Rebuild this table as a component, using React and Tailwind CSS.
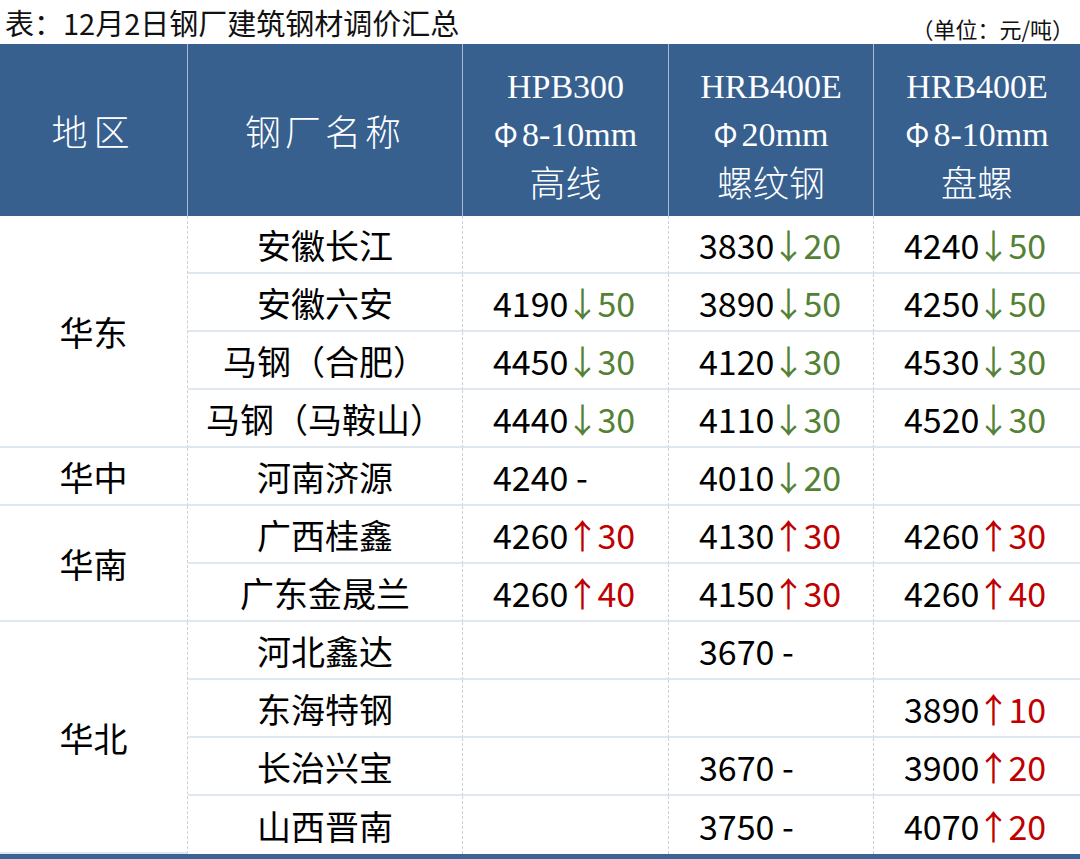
import React from "react";

const cjk = { fontFamily: '"Noto Sans CJK SC", "Noto Sans", sans-serif' };
const serif = { fontFamily: '"Liberation Serif", "Noto Sans CJK SC", serif' };

const rows = [
  { name: "安徽长江", c: [null, ["3830", "↓20"], ["4240", "↓50"]] },
  { name: "安徽六安", c: [["4190", "↓50"], ["3890", "↓50"], ["4250", "↓50"]] },
  { name: "马钢（合肥）", c: [["4450", "↓30"], ["4120", "↓30"], ["4530", "↓30"]] },
  { name: "马钢（马鞍山）", c: [["4440", "↓30"], ["4110", "↓30"], ["4520", "↓30"]] },
  { name: "河南济源", c: [["4240", " -"], ["4010", "↓20"], null] },
  { name: "广西桂鑫", c: [["4260", "↑30"], ["4130", "↑30"], ["4260", "↑30"]] },
  { name: "广东金晟兰", c: [["4260", "↑40"], ["4150", "↑30"], ["4260", "↑40"]] },
  { name: "河北鑫达", c: [null, ["3670", " -"], null] },
  { name: "东海特钢", c: [null, null, ["3890", "↑10"]] },
  { name: "长治兴宝", c: [null, ["3670", " -"], ["3900", "↑20"]] },
  { name: "山西晋南", c: [null, ["3750", " -"], ["4070", "↑20"]] },
];

const regions = [
  { label: "华东", span: "row-span-4" },
  { label: "华中", span: "row-span-1" },
  { label: "华南", span: "row-span-2" },
  { label: "华北", span: "row-span-4" },
];
const regionStart = [0, 4, 5, 7];

// arrow + amount; the arrow glyph is pulled in a bit to sit closer to the price
const Change = ({ v }) => {
  if (v.startsWith("↓") || v.startsWith("↑")) {
    const color = v.startsWith("↓") ? "text-[#538135]" : "text-[#c00000]";
    return (
      <span className={color}>
        <span className="inline-block -ml-[3px] -mr-[2px]">{v[0]}</span>
        {v.slice(1)}
      </span>
    );
  }
  return <span className="whitespace-pre">{v}</span>;
};

const HeadCol = ({ top, spec, bottom, last }) => (
  <div
    className={`flex flex-col items-center justify-center leading-[47px] ${
      last ? "" : "border-r border-[#a8bbd2]"
    }`}
  >
    <div className="text-[34px] mt-[8px]" style={serif}>{top}</div>
    <div className="text-[34px]" style={serif}>
      <span className="text-[30px] mr-1" style={cjk}>Φ</span>
      {spec}
    </div>
    <div className="text-[36px] font-light" style={cjk}>{bottom}</div>
  </div>
);

export default function App() {
  const cells = [];
  rows.forEach((r, i) => {
    const ri = regionStart.indexOf(i);
    if (ri !== -1) {
      cells.push(
        <div
          key={"r" + i}
          className={`${regions[ri].span} flex items-center justify-center border-b-2 border-r border-b-[#dfe7f1] border-r-[#ccd1d9] border-dashed text-[34px] text-black`}
          style={{ ...cjk, borderBottomStyle: "solid" }}
        >
          {regions[ri].label}
        </div>
      );
    }
    const last = i === rows.length - 1;
    cells.push(
      <div
        key={"n" + i}
        className={`flex items-center justify-center border-r border-dashed border-r-[#ccd1d9] text-[34px] text-black ${
          last ? "" : "border-b-2 border-b-[#dfe7f1]"
        }`}
        style={{ ...cjk, borderBottomStyle: "solid" }}
      >
        {r.name}
      </div>
    );
    r.c.forEach((v, j) => {
      cells.push(
        <div
          key={"c" + i + j}
          className={`flex items-center pl-[30px] text-[34px] text-black ${
            j < 2 ? "border-r border-dashed border-r-[#ccd1d9]" : ""
          } ${last ? "" : "border-b-2 border-b-[#dfe7f1]"}`}
          style={{ ...cjk, borderBottomStyle: "solid" }}
        >
          {v && (
            <>
              <span>{v[0]}</span>
              <Change v={v[1]} />
            </>
          )}
        </div>
      );
    });
  });

  return (
    <div className="w-[1080px] h-[859px] bg-white overflow-hidden" style={cjk}>
      <div className="h-[44px] flex justify-between items-start">
        <div className="text-[29px] leading-[44px] pl-[5px] text-[#111]">
          表：12月2日钢厂建筑钢材调价汇总
        </div>
        <div className="text-[22px] leading-[22px] pt-[17px] pr-[6px] text-[#111]">
          （单位：元/吨）
        </div>
      </div>

      <div className="grid grid-cols-[188px_275px_206px_205px_206px] h-[172px] bg-[#37608f] text-white">
        <div className="flex items-center justify-center border-r border-[#a8bbd2] text-[36px] font-light tracking-[6px]">
          地区
        </div>
        <div className="flex items-center justify-center border-r border-[#a8bbd2] text-[36px] font-light tracking-[4px]">
          钢厂名称
        </div>
        <HeadCol top="HPB300" spec="8-10mm" bottom="高线" />
        <HeadCol top="HRB400E" spec="20mm" bottom="螺纹钢" />
        <HeadCol top="HRB400E" spec="8-10mm" bottom="盘螺" last />
      </div>

      <div className="grid grid-cols-[188px_275px_206px_205px_206px] grid-rows-[repeat(11,58px)]">
        {cells}
      </div>
      <div className="h-[5px] bg-[#3b6496]" />
    </div>
  );
}
